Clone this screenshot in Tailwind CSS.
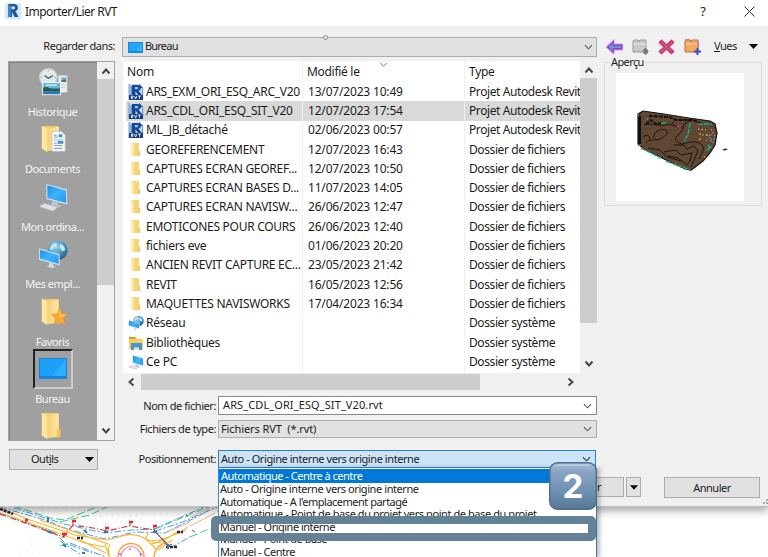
<!DOCTYPE html>
<html lang="fr">
<head>
<meta charset="utf-8">
<title>Importer/Lier RVT</title>
<script src="https://cdn.jsdelivr.net/npm/@tailwindcss/browser@4"></script>
</head>
<body class="bg-white">
<svg class="absolute w-0 h-0">
  <defs>
    <linearGradient id="fg" x1="0" x2="1"><stop offset="0" stop-color="#f6d074"/><stop offset="1" stop-color="#ffe9a6"/></linearGradient>
    <linearGradient id="sg" x1="0" y1="0" x2="1" y2="1"><stop offset="0" stop-color="#1a8fe8"/><stop offset=".5" stop-color="#3fb2ff"/><stop offset="1" stop-color="#2496ec"/></linearGradient>
    <linearGradient id="bg" x1="0" y1="0" x2="0" y2="1"><stop offset="0" stop-color="#a9c1da"/><stop offset=".2" stop-color="#88a4c2"/><stop offset=".6" stop-color="#7192b4"/><stop offset="1" stop-color="#587795"/></linearGradient>
    <radialGradient id="gg" cx=".4" cy=".3" r=".8"><stop offset="0" stop-color="#a5dcf2"/><stop offset=".6" stop-color="#3b86b4"/><stop offset="1" stop-color="#1d5480"/></radialGradient>
  </defs>
  <symbol id="rvt" viewBox="0 0 16 16">
    <path d="M1 0h10l4 4v12H1z" fill="#c9dcf0"/><path d="M11 0l4 4h-4z" fill="#12408a"/>
    <path d="M4 1h5.500c4.500 0 4.500 5 1 5.800L14 11h-4L7.500 7.200V11H4z" fill="#16489a"/><path d="M7 3h2c1.600 0 1.600 2.200 0 2.200H7z" fill="#a8caee"/><path d="M2.500 1.500L4 2.500v8.500H2.500z" fill="#5f93cb"/>
    <path d="M1 11h14v5H1z" fill="#143c78"/><path d="M1 0v16M14.700 4v12" stroke="#2c5c9c" stroke-width=".6"/><path d="M3.500 15v-3h1.500v1.300H3.700l1.600 1.700M6.500 12l1.200 3 1.200-3M10 12h3M11.500 12v3" stroke="#fff" stroke-width=".8" fill="none"/>
  </symbol>
  <symbol id="folder" viewBox="0 0 16 16"><path d="M3 1h8v11h1v2H5L3 13z" fill="#f5d478"/><path d="M3 1l3 1.500V14l-3-1z" fill="#ffe9a8"/><path d="M10.500 9H12v5h-1.500z" fill="#f0c75e"/></symbol>
  <symbol id="bigfolder" viewBox="0 0 32 32"><path d="M4 2h18v21h1v5H10z" fill="#f2cc6c"/><path d="M4 2l6 3v25l-6-4z" fill="#ffe7a0"/><path d="M10 5l12-2v24l-12 2z" fill="url(#fg)"/><path d="M20 19h4v9h-4z" fill="#efc55c"/></symbol>
  <symbol id="net" viewBox="0 0 32 32"><circle cx="21" cy="12" r="10.500" fill="url(#gg)"/><path d="M15 6c3-3 6-1 5 1s-4 2-5 5l-3-1zM24 5c3 1 5 4 5 7l-3 1-3-4z" fill="#c4e8ef"/><path d="M1 10l22 6v12L1 22z" fill="#d3e5f0"/><path d="M2 11.500l20 5.500v9.500L2 21z" fill="url(#sg)"/><path d="M12 25l4 1.500v2l3 1-4 1.500-6-2 3-1z" fill="#d5dbe0"/></symbol>
  <symbol id="pc" viewBox="0 0 32 32"><path d="M9 2l22 6v16L9 18z" fill="#d5e6f0"/><path d="M10 3.500l20 5.500v13.500L10 17z" fill="url(#sg)"/><path d="M16 20l5 1.500V24l4 1.500-3 1.500-8-3z" fill="#bcc7cf"/><path d="M1 26l6-3 14 4-5 4z" fill="#e0e4e7" stroke="#b5bcc2" stroke-width=".7"/></symbol>
  <symbol id="lib" viewBox="0 0 16 16"><path d="M1 2h7l1 2h6v10H1z" fill="#f8ce59"/><path d="M1 2h6l1 2H1z" fill="#e19c20"/><path d="M3 8h11v7h-3v-3H6v3H3z" fill="#3b97e0"/></symbol>
  <symbol id="hist" viewBox="0 0 32 32"><path d="M22 9h9v18h-9z" fill="#eceff1" stroke="#c4c8cb" stroke-width=".6"/><path d="M25 11h5v5h-5z" fill="#6eafdd"/><path d="M25 14l5-1v3h-5z" fill="#487950"/><path d="M24 19h5M24 22h5" stroke="#bcc6cc"/><circle cx="11" cy="11" r="9.500" fill="#e5e9ec" stroke="#bfc5c9" stroke-width="1.400"/><path d="M7 9l4 3 5-3" fill="none" stroke="#46515b" stroke-width="1.300"/><path d="M11 3v1.500M3 11h1.500M17.500 11H19" stroke="#89949c"/><path d="M4.500 16h20v14h-20z" fill="#f7f9fa"/><path d="M5.500 17h18v12h-18z" fill="#63b5e6"/><path d="M5.500 22c4-2 6 1 10 1h8v3h-18z" fill="#2b5d42"/><path d="M5.500 26h18v3h-18z" fill="#2978ba"/><path d="M8 19c3-2 7 1 12-1v2H8z" fill="#d7effa"/></symbol>
  <symbol id="docs" viewBox="0 0 32 32"><use href="#bigfolder" width="32" height="32"/><path d="M15 8h10l4 4v17H15z" fill="#f6f8fa" stroke="#b9c4ce" stroke-width=".7"/><path d="M17 12h3M17 14h4M17 23h9M17 26h9M17 20.500h3" stroke="#7898ae"/><path d="M22 11h4v3h-4zM21 18h6v3h-6z" fill="#3e94cd"/><path d="M17 17h10" stroke="#99b2c5"/></symbol>
  <symbol id="fav" viewBox="0 0 32 32"><use href="#bigfolder" width="32" height="32"/><path d="M23 11l2.500 6.500 6.500.5-5 4.500 3 7.500-7-4-6 4 1.500-7-4-4.500 6-.5z" fill="#f9a932" stroke="#e18b22" stroke-width=".6"/><path d="M23 12l2 7 6 0-8 3z" fill="#ffc65b"/></symbol>
  <symbol id="down" viewBox="0 0 10 6"><path d="M1 1l4 4 4-4" fill="none" stroke="currentColor" stroke-width="1.200"/></symbol>
  <symbol id="bold" viewBox="0 0 10 8"><path d="M1.500 1.500L5 5.500l3.500-4" fill="none" stroke="#444" stroke-width="1.900"/></symbol>
</svg>

<main class="relative w-[768px] h-[557px] overflow-hidden bg-white font-['Noto_Sans','Open_Sans',sans-serif] text-[12px] text-[#1c1c1c] whitespace-nowrap">
  <section class="relative z-10 h-[507px] bg-[#f0f0f0] border-b border-[#c2c2c2] shadow-[0_3px_9px_rgba(0,0,0,0.4)]">
    <header class="h-[26px] bg-white flex items-center pl-[5px]">
      <svg class="w-4 h-4 mt-[-4px]" viewBox="0 0 16 16"><path d="M0 0h16v16H0z" fill="#d6e7f7"/><path d="M3 1h6c5 0 5 6 1.500 7l3 6h-4L7 9v5H3z" fill="#1b589f"/><path d="M6.500 3.500h2c2 0 2 2.800 0 2.800h-2z" fill="#d6e7f7"/><path d="M3 1l3 2v11H3z" fill="#4384c4"/></svg>
      <h1 class="ml-1 mt-[-3px] text-[12px] tracking-[-0.53px] grow">Importer/Lier RVT</h1>
      <span class="mt-[-3px] text-[13px] mr-[38px]">?</span>
      <svg class="w-[11px] h-[11px] mt-[-3px] mr-[13px]" viewBox="0 0 11 11"><path d="M.5.5l10 10M10.500.5l-10 10" stroke="#333" fill="none"/></svg>
    </header>

    <div class="flex h-[480px]">
      <div class="w-[115px] shrink-0">
        <div class="h-[35px] pt-[11px] text-right leading-[18px] text-[11px] tracking-[-0.5px]">Regarder dans:</div>
        <nav class="ml-2 h-[380px] flex border border-[#9ba2ab] overflow-hidden">
          <ul class="w-[88px] shrink-0 bg-[#a0a0a0] text-[#f4f4f4] text-[11px] leading-4 tracking-[-0.45px] border-l border-t border-[#808080]" id="places"></ul>
          <div class="grow flex flex-col bg-[#f0f0f0]">
            <div class="h-[17px] flex items-center justify-center"><svg class="w-[10px] h-2 rotate-180"><use href="#bold"/></svg></div>
            <div class="h-[206px] bg-[#cdcdcd]"></div>
            <div class="mt-auto h-[18px] flex items-center justify-center"><svg class="w-[10px] h-2"><use href="#bold"/></svg></div>
          </div>
        </nav>
        <button class="ml-[9px] mt-2 w-[89px] h-[21px] bg-[#e1e1e1] border border-[#adadad] flex items-center text-[11px] tracking-[-0.5px]"><span class="ml-[21px]">Out<u>i</u>ls</span><svg class="w-[9px] h-[5px] ml-auto mr-[3px]" viewBox="0 0 9 5"><path d="M0 0h9L4.500 5z"/></svg></button>
      </div>

      <div class="w-[475px] ml-[7px] shrink-0">
        <div class="relative mt-[11px] h-[20px] bg-[#e1e1e1] border border-[#adadad] flex items-center px-[5px] text-[11px] tracking-[-0.8px]">
          <svg class="w-[15px] h-[11px]" viewBox="0 0 15 11"><path d="M0 0h15v11H0z" fill="#1689dc"/><path d="M1 1h13v8H1z" fill="#22a4fb"/><path d="M14 1v8H8z" fill="#34b2ff"/></svg>
          <span class="ml-[2px] mt-[-2px]">Bureau</span>
          <svg class="w-[9px] h-[6px] ml-auto mr-[-2px] text-[#555]"><use href="#down"/></svg>
          <i class="absolute left-[200px] top-[-3px] w-[5px] h-[5px] rounded-full border border-[#8a8a9c] bg-[#e8e8ee]"></i>
        </div>
        <div class="mt-[4px] flex h-[312px]">
          <div class="relative w-[457px] ml-px bg-white tracking-[-0.27px] overflow-hidden">
            <div class="absolute left-[179px] top-0 h-full w-px bg-[#e8f2fb]"></div>
            <div class="absolute left-[341px] top-0 h-full w-px bg-[#e8f2fb]"></div>
            <svg class="absolute left-[256px] top-[1px] w-[9px] h-[5px] text-[#777]"><use href="#down"/></svg>
            <div class="h-[21px] flex items-center"><span class="w-[180px] pl-[4px] tracking-[-0.2px]">Nom</span><span class="w-[162px] pl-[4px] tracking-[-0.3px]">Modifié le</span><span class="pl-1 tracking-[-0.3px]">Type</span></div>
            <ul id="files"></ul>
          </div>
          <div class="w-[17px] flex flex-col bg-[#f0f0f0]">
            <div class="h-[17px] flex items-center justify-center"><svg class="w-[10px] h-2 rotate-180"><use href="#bold"/></svg></div>
            <div class="h-[245px] bg-[#cdcdcd]"></div>
            <div class="mt-auto h-[18px] flex items-center justify-center"><svg class="w-[10px] h-2"><use href="#bold"/></svg></div>
          </div>
        </div>
        <div class="h-[17px] flex items-center w-[458px] pl-[4px]">
          <svg class="w-[10px] h-2 rotate-90"><use href="#bold"/></svg>
          <div class="ml-[5px] w-[339px] h-4 bg-[#cdcdcd]"></div>
          <svg class="w-[10px] h-2 -rotate-90 ml-auto mr-[4px]"><use href="#bold"/></svg>
        </div>
        <div class="text-[11px] tracking-[-0.43px]">
          <div class="flex items-center mt-[6px] h-[19px]"><label class="w-[96px] pr-[2px] pt-px text-right">Nom de fichier:</label><div class="grow h-[19px] flex items-center bg-white border border-[#8a8a8a] pl-1 pr-1 tracking-[0.1px]">ARS_CDL_ORI_ESQ_SIT_V20.rvt<svg class="w-[9px] h-[6px] ml-auto text-[#555]"><use href="#down"/></svg></div></div>
          <div class="flex items-center mt-[5px] h-[18px]"><label class="w-[96px] pr-[2px] pt-px text-right">Fichiers de type:</label><div class="grow h-[18px] flex items-center bg-[#e1e1e1] border border-[#adadad] pl-[2px] pr-1 whitespace-pre tracking-[-0.1px]">Fichiers RVT  (*.rvt)<svg class="w-[9px] h-[6px] ml-auto text-[#555]"><use href="#down"/></svg></div></div>
          <div class="flex items-center mt-[12px] h-[18px]"><label class="w-[96px] pr-[2px] pt-px text-right tracking-[-0.5px]">Positionnement:</label><div class="w-[378px] h-[18px] flex items-center bg-[#cce4f7] border border-[#2f7fc1] pl-[2px] pr-1"><span class="pt-px">Auto - Origine interne vers origine interne</span><svg class="w-[9px] h-[6px] ml-auto text-[#333]"><use href="#down"/></svg></div></div>
        </div>
      </div>

      <div class="w-[171px] flex flex-col">
        <div class="h-[35px] pt-[14px] flex items-center pl-[9px] gap-[9px]">
          <svg class="w-[17px] h-4 -mt-2 shrink-0" viewBox="0 0 17 16"><path d="M1 8l6.500-6v3.500H16v5H7.500V14z" fill="#6a91d7" stroke="#dc45f2" stroke-width="1.600"/><path d="M2 8l5-4.500v3h8.500v3H7v3z" fill="#7292dc" stroke="#4965bb" stroke-width="1"/></svg>
          <svg class="w-[17px] h-4 -mt-2 shrink-0" viewBox="0 0 17 16"><path d="M1 2l1-1h4l1 2 1-2h6v12H1z" fill="#c9c9c9" stroke="#999"/><path d="M1 5h13" stroke="#eee"/><path d="M8 15.500c3 0 4-1 4-3h-2l3.500-4 3.500 4h-1c0 3-3 3.500-5 3.500z" fill="#777"/></svg>
          <svg class="w-[17px] h-4 -mt-2 shrink-0" viewBox="0 0 17 16"><path d="M2 2l13 12M15 2L2 14" stroke="#ee4be8" stroke-width="5"/><path d="M2 2l13 12M15 2L2 14" stroke="#b94553" stroke-width="3.400"/><path d="M3 3l11 10M14 3L3 13" stroke="#d86c6c"/></svg>
          <svg class="w-[17px] h-4 -mt-2 shrink-0" viewBox="0 0 17 16"><path d="M1 2l1-1h4l1 2 1-2h6v12H1z" fill="#f2a963" stroke="#c9703c"/><path d="M1 .5h5M14.500 2v7" stroke="#e05bd0" stroke-width=".8"/><path d="M2 5h11" stroke="#fbd3a3"/><path d="M13.500 9v7M10 12.500h7" stroke="#3b49cc" stroke-width="2"/></svg>
          <span class="-mt-2 ml-[4px] w-[23px] shrink-0 text-[11px] tracking-[-0.5px]"><u>V</u>ues</span>
          <svg class="w-[9px] h-[5px] -mt-2 ml-[3px] shrink-0" viewBox="0 0 9 5"><path d="M0 0h9L4.500 5z"/></svg>
        </div>
        <fieldset class="relative ml-[7px] mt-[1px] w-[158px] h-[144px] border border-[#dcdcdc]">
          <legend class="absolute left-[5px] top-[-9px] px-[1px] bg-[#f0f0f0] text-[11px] leading-[16px] tracking-[-0.6px]">Aperçu</legend>
          <svg class="mt-[10px] ml-[11px] w-[128px] h-[128px] bg-white" viewBox="616 73 128 128">
            <path d="M638 114l5-3 21 3 25 4 21 3 5 3 2 9-2 12-5 8-7 8-9 7-3 2-6-1-23-11-16-8-8-6z" fill="#604733" stroke="#17120e" stroke-width="1.200"/>
            <path d="M638 114v31l3 2v-31z" fill="#111"/>
            <path d="M644 125c9-3 16 3 24-1l8 2c7-2 9 4 3 8s-4 8 3 10l9-2c9-1 14 4 12 9l-4 8M654 135c3-6 10-7 13-4 2 3-3 6-7 8s-8 0-6-4zM646 143c4-5 7-1 9-4M643 137c5-4 8 0 7 4M674 145h10l3 4 7-3 4 5-4 9-3 7M664 152l11-2 6 5 11-2-2 8-4 5M648 148l12 2 7 7 14 4M668 156l10 2 8 6M690 121l-6 3-1 5M676 119l-4 5" fill="none" stroke="#1b1511"/>
            <path d="M649 116l20 1 8 3 16 0 10 4M646 124l5-4 5 4 5-1" stroke="#110e0b" stroke-width="1.800" fill="none" stroke-dasharray="4 1"/>
            <path d="M641 148l20 10M666 161l24 9M690 123l-2 12-4 6M698 124h14M706 151l5-4-3-2M661 123h6M638 114v3" fill="none" stroke="#17ad78" stroke-width="1.500" stroke-dasharray="5 1"/>
            <path d="M698 129l8 1M702 135h8M706 141l7-8M711 129l4 7-2 7" stroke="#b9b2ac" stroke-dasharray="1.500 2" fill="none"/><path d="M700 133v10M707 134v4M704 156l1 2M640 144v2" stroke="#e0c52c" stroke-dasharray="2 3"/><path d="M711 138v4M708 147h3M646 119h2" stroke="#338ec3" stroke-width="1.500"/><path d="M642 148l2 1M675 163h2" stroke="#df3535" stroke-width="1.500"/><path d="M677 126h4" stroke="#c536b5" stroke-width="1.500"/>
            <path d="M722 150l3-1.500 3 .5-3 1.500z" fill="#222"/>
          </svg>
        </fieldset>
        <div class="mt-auto mb-[8px] flex items-start">
          <button class="w-[27px] h-[20px] bg-[#e1e1e1] border border-l-0 border-[#adadad] text-left leading-[18px] text-[11px]">r</button>
          <button class="ml-[2px] w-[15px] h-[20px] bg-[#e1e1e1] border border-[#adadad] flex items-center justify-center"><svg class="w-[8px] h-[5px]" viewBox="0 0 9 5"><path d="M0 0h9L4.500 5z"/></svg></button>
          <button class="ml-[23px] w-[96px] h-[21px] bg-[#e1e1e1] border border-[#adadad] text-[11px] leading-[19px] tracking-[-0.5px]">Annuler</button>
        </div>
      </div>
    </div>
    <svg class="absolute right-0 bottom-[1px] w-[5px] h-[6px]" viewBox="0 0 5 6"><path d="M0 4h2M3 4h2M3 1h2" stroke="#aaa" stroke-width="2"/></svg>
  </section>

  <svg class="w-[220px] h-[50px]" viewBox="0 507 220 50" fill="none">
    <path d="M20 516l12 30M70 516h70M90 522h120M100 514h90M30 511h60M20 552h30M170 525h40" stroke="#cdeadb" stroke-width="1" stroke-dasharray="1 5"/>
    <path d="M0 507l45 13 25 10 35 9 30-7 30 1 45-23M14 508l50 16 40 9 28-3 22-1 50-22M0 513l55 20 10 10 30 11M155 531l25-8 37-16M60 541l20 13M70 543l36 14M170 548l20-11" stroke="#4f9be8" stroke-dasharray="7 2 2 2"/>
    <path d="M14 506l36 12 15 2 34-14M60 522l30-7 19-9M155 529l58-24M190 537l28-12M60 546l10-2" stroke="#38cf88" stroke-dasharray="8 3"/>
    <path d="M0 508l30 12 45 15 32 5 12-3c10-4 20-2 27 2l10 4 10-5 20-8M0 513l50 17 35 13 20 4M40 520l35 12 33 12M80 540l26 13M110 544c-2 3-2 8 0 13M148 532l-2 7 10 10M151 541l15-2 11-7M150 544l12-2M158 550l14-10M105 544l4 12" stroke="#f4b832" stroke-width="1.100"/>
    <path d="M118 557c0-18 26-18 26 0M154 557c1-9 5-12 13-15" stroke="#f6a640" stroke-width="1.400"/><path d="M121 557c1-14 19-14 20 0" stroke="#e781cf" stroke-width="1.200"/>
    <path d="M170 531l20-9M190 526l25-13M178 533l10-6M190 517l20-9" stroke="#f2b184"/>
    <path d="M0 514l28 10 22 8 13 5 10-12 20 3 14 3 22-5 25 4 16 17" stroke="#cb3f3f" stroke-dasharray="6 2 1 2" stroke-width="1.200"/>
    <path d="M73 525v-5M106 531v-4M130 526v-5M154 530v-5M26 523v-3M64 538v-4" stroke="#d42e35"/><path d="M72 521h4M105 528h4M129 522h4M153 526h4M25 520h3M62 534h5" stroke="#e62731" stroke-width="2.500"/>
    <path d="M0 509l13 5M77 538h6M177 532h6M166 547h11" stroke="#371b40" stroke-width="2.500" stroke-dasharray="3 1"/><path d="M154 530l14 16 4-2" stroke="#593957"/><path d="M48 517v5M47 531l5 2M84 530l3 3M104 532h4M153 532h4M63 544l3 3M168 544v5M82 553h3" stroke="#2879c6" stroke-width="2"/><path d="M130 548v2M120 553v2M141 553v2M187 515v2M192 530l3 2" stroke="#555"/>
  </svg>

  <div class="absolute z-20 left-[218px] top-[468px] w-[379px] h-[90px] bg-white border-x border-[#2f8fe0] border-r-[#39779f] text-[11px] leading-[12.6px] tracking-[-0.42px] pt-px shadow-[3px_0_4px_rgba(0,0,0,0.25)]">
    <ul>
      <li class="h-[14px] bg-[#0078d7] text-white pl-[2px] leading-[14px] tracking-[-0.5px]">Automatique - Centre à centre</li>
      <li class="pl-px">Auto - Origine interne vers origine interne</li>
      <li class="pl-px tracking-[-0.5px]">Automatique - A l'emplacement partagé</li>
      <li class="pl-px">Automatique - Point de base du projet vers point de base du projet</li>
      <li class="pl-px tracking-[-0.5px]">Manuel - Origine interne</li>
      <li class="pl-px tracking-[-0.5px]">Manuel - Point de base</li>
      <li class="pl-px tracking-[-0.5px]">Manuel - Centre</li>
    </ul>
  </div>
  <div class="absolute z-20 left-[211px] top-[516px] w-[385px] h-[25px] border-8 border-[#648296] rounded-[5px]"></div>
  <svg class="absolute z-20 left-[549px] top-[462px] w-[48px] h-[48px]" viewBox="0 0 48 48">
    <rect x=".75" y=".75" width="46.500" height="46.500" rx="8" fill="url(#bg)" stroke="#516e8e" stroke-width="1.500"/>
    <path d="M8 3h32" stroke="#c3d4e6" stroke-width="2" opacity=".6"/>
    <text x="24" y="35.500" text-anchor="middle" font-family="Inter" font-size="33" font-weight="700" fill="#fff">2</text>
  </svg>
</main>

<script>
const files = [
  ['rvt', 'ARS_EXM_ORI_ESQ_ARC_V20', '13/07/2023 10:49', 'Projet Autodesk Revit'],
  ['rvt', 'ARS_CDL_ORI_ESQ_SIT_V20', '12/07/2023 17:54', 'Projet Autodesk Revit'],
  ['rvt', 'ML_JB_détaché', '02/06/2023 00:57', 'Projet Autodesk Revit'],
  ['folder', 'GEOREFERENCEMENT', '12/07/2023 16:43', 'Dossier de fichiers'],
  ['folder', 'CAPTURES ECRAN GEOREF...', '12/07/2023 10:50', 'Dossier de fichiers'],
  ['folder', 'CAPTURES ECRAN BASES D...', '11/07/2023 14:05', 'Dossier de fichiers'],
  ['folder', 'CAPTURES ECRAN NAVISW...', '26/06/2023 12:47', 'Dossier de fichiers'],
  ['folder', 'EMOTICONES POUR COURS', '26/06/2023 12:40', 'Dossier de fichiers'],
  ['folder', 'fichiers eve', '01/06/2023 20:20', 'Dossier de fichiers'],
  ['folder', 'ANCIEN REVIT CAPTURE EC...', '23/05/2023 21:42', 'Dossier de fichiers'],
  ['folder', 'REVIT', '16/05/2023 12:56', 'Dossier de fichiers'],
  ['folder', 'MAQUETTES NAVISWORKS', '17/04/2023 16:34', 'Dossier de fichiers'],
  ['net', 'Réseau', '', 'Dossier système'],
  ['lib', 'Bibliothèques', '', 'Dossier système'],
  ['pc', 'Ce PC', '', 'Dossier système'],
];
document.getElementById('files').innerHTML = files.map(([icon, name, date, type], i) =>
  `<li class="h-[19.3px] ml-[3px] flex items-center ${i === 1 ? 'bg-[#d9d9d9]' : ''}">
    <svg class="w-4 h-4 ml-[2px] shrink-0"><use href="#${icon}"/></svg>
    <span class="w-[159px] shrink-0 pl-[2px]">${name}</span><span class="w-[162px] shrink-0 pl-[5px] tracking-[-0.18px]">${date}</span><span class="pl-1 tracking-[-0.4px]">${type}</span></li>`).join('');

const places = [['hist', 'Historique'], ['docs', 'Documents'], ['pc', 'Mon ordina...'], ['net', 'Mes empl...'], ['fav', 'Favoris'], ['desk', 'Bureau'], ['bigfolder', '']];
document.getElementById('places').innerHTML = places.map(([icon, label]) =>
  `<li class="h-[57.4px] flex flex-col items-center pr-[2px]">` + (icon === 'desk'
    ? `<div class="w-10 h-10 shrink-0 -mt-px flex items-center justify-center border-2 border-l-[#222] border-t-[#222] border-r-[#ccc] border-b-[#ccc]"><svg class="w-[28px] h-[21px]" viewBox="0 0 28 21"><path d="M0 0h28v21H0z" fill="#1585da"/><path d="M1 1h26v17H1z" fill="#1e9ffa"/><path d="M27 1v17H13z" fill="#30adff"/></svg></div><span class="mt-[2px]">${label}</span>`
    : `<svg class="w-[30px] h-[30px] mt-[4px] shrink-0"><use href="#${icon}"/></svg><span class="mt-[7px]">${label}</span>`) + '</li>').join('');
</script>
</body>
</html>
